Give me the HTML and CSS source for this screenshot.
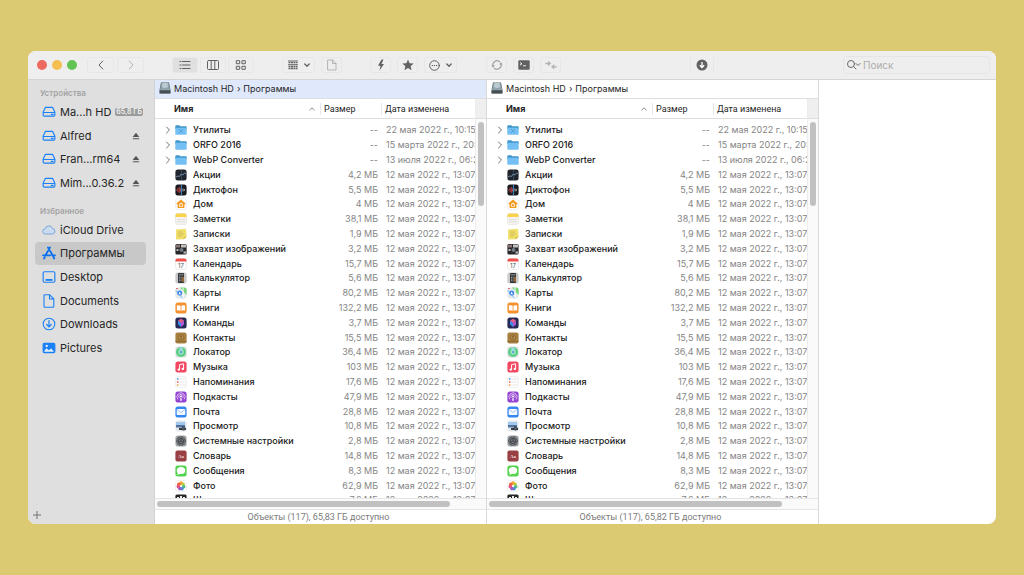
FILE: index.html
```html
<!DOCTYPE html>
<html lang="ru">
<head>
<meta charset="utf-8">
<meta name="viewport" content="width=device-width, initial-scale=1">
<title>Программы</title>
<link rel="stylesheet" href="styles.css">
</head>
<body>
<svg class="sprite" aria-hidden="true">
  <symbol id="drive" viewBox="0 0 12 12"><path d="M3 2h6l2 4v2.600a1 1 0 0 1-1 1H2a1 1 0 0 1-1-1V6zM1 6.400h10M8 8.100h1.500" fill="none" stroke="#1a80f5" stroke-linejoin="round" stroke-linecap="round"/></symbol>
  <symbol id="cloud" viewBox="0 0 14 12"><path d="M3.500 10a2.600 2.600 0 0 1-.3-5.200A3.800 3.800 0 0 1 10.500 4.500a2.800 2.800 0 0 1 .3 5.500z" fill="#cbdcf0" stroke="#6f9fda" stroke-width=".9"/></symbol>
  <symbol id="apps" viewBox="0 0 14 14"><path d="M6 1.500l4.800 8M8 1.500L3.600 9M1 9.300h7.500M10.500 9.300H13M2.800 11.200l-.8 1.300M11.200 10.500l1 2" fill="none" stroke="#0b72ef" stroke-width="1.800" stroke-linecap="round"/></symbol>
  <symbol id="desktop" viewBox="0 0 12 12"><rect x="1" y="1.500" width="10" height="9" rx="1" fill="none" stroke="#1a80f5"/><path d="M3 8.500h6" stroke="#1a80f5" stroke-width="1.600"/></symbol>
  <symbol id="document" viewBox="0 0 12 14"><path d="M2 .7h4.500L10.800 5v7.300a1 1 0 0 1-1 1H2a1 1 0 0 1-1-1V1.700a1 1 0 0 1 1-1zM6.500.9V5h4" fill="none" stroke="#1a80f5" stroke-width="1.100" stroke-linejoin="round"/></symbol>
  <symbol id="downloads" viewBox="0 0 14 14"><circle cx="7" cy="7" r="5.800" fill="none" stroke="#1a80f5" stroke-width="1.100"/><path d="M7 3.500v6M4.700 7.500L7 9.800l2.300-2.300" fill="none" stroke="#1a80f5" stroke-width="1.200" stroke-linecap="round"/></symbol>
  <symbol id="pictures" viewBox="0 0 12 12"><rect x="1" y="2" width="10" height="8" rx="1" fill="#1a80f5" stroke="#1a80f5"/><path d="M1.800 9l2-3 1.800 2 2.400-1.500L10.200 9.300H1.800z" fill="#e4eefa"/><circle cx="4" cy="4.200" r="1" fill="#e4eefa"/></symbol>
  <symbol id="eject" viewBox="0 0 8 8"><path d="M4 .8L7.300 5H.7zM.8 6.200h6.400v1H.8z" fill="#555"/></symbol>
  <symbol id="disk" viewBox="0 0 12 12"><path d="M2 .5h8L11.700 9v2a.7.7 0 0 1-.7.7H1a.7.7 0 0 1-.7-.7V9z" fill="#59646a"/><path d="M2.500 1h7L11 8H1z" fill="#93a5ac"/><path d="M3.500 1h5l.5 4q-3 2-6 0z" fill="#b9ccd2"/><path d="M1 9h10v2H1z" fill="#454e52"/></symbol>
  <symbol id="folder" viewBox="0 0 12 12"><path d="M.3 2.200q0-1 1-1h2.900l1.200 1h5.400q.9 0 .9.900v2H.3z" fill="#3f96ca"/><path d="M.3 3.700h11.400v6.200q0 .8-.8.8H1.100q-.8 0-.8-.8z" fill="#74bff3"/></symbol>
  <symbol id="utilities" viewBox="0 0 12 12"><use href="#folder"/><path d="M4 5l4 4M8 5L4 9" stroke="#4d9dd3" stroke-width=".8"/></symbol>
  <symbol id="stocks" viewBox="0 0 12 12"><rect x=".4" y=".4" width="11.200" height="11.200" rx="2.500" fill="#20242c"/><path d="M1 8l2-1 1.500.5L6 5l2 1 1.500-2L11 4.500" fill="none" stroke="#7da0bf" stroke-width=".8"/><path d="M6.500 1v10" stroke="#4a6f93" stroke-width=".5"/></symbol>
  <symbol id="voice" viewBox="0 0 12 12"><rect x=".4" y=".4" width="11.200" height="11.200" rx="2.500" fill="#1c1a1f"/><path d="M1.700 5.500v1M3 4v4M4.300 3v6M5.500 4.500v3" stroke="#e34b4b" stroke-width=".8"/><path d="M6.400 1v10" stroke="#3aa0ea" stroke-width=".9"/><path d="M8 4.500v3M9.300 5v2" stroke="#c9c9c9" stroke-width=".8"/></symbol>
  <symbol id="home" viewBox="0 0 12 12"><rect x=".5" y=".5" width="11" height="11" rx="2.500" fill="#fff" stroke="#e7e7e7" stroke-width=".6"/><path d="M6 1.500l4.700 4-.7.900-.6-.4v4H2.600V6l-.6.400-.7-.9z" fill="#f39a23"/><path d="M6 4.500l1.900 1.600v2.600H4.100V6.100z" fill="#fff1d6"/><path d="M5.100 6.200h1.800v1.700H5.100z" fill="#ef8d1c"/></symbol>
  <symbol id="notes" viewBox="0 0 12 12"><rect x=".4" y=".4" width="11.200" height="11.200" rx="2.300" fill="#f4f3f0" stroke="#dddbd4" stroke-width=".5"/><path d="M.4 4V2.700Q.4.400 2.700.4h6.600q2.300 0 2.300 2.300V4z" fill="#fad34a"/><path d="M2 6.500h8M2 8.800h8" stroke="#d2d0c9" stroke-width=".6"/></symbol>
  <symbol id="stickies" viewBox="0 0 12 12"><path d="M1 1.500l10-.7.700 8-3 2.500-7.700.2z" fill="#efdf6b"/><path d="M11.700 8.800l-3 2.500-.2-2z" fill="#cdb942"/><path d="M3 4h5M3 6h6M3 8h4" stroke="#bfa943" stroke-width=".6"/></symbol>
  <symbol id="capture" viewBox="0 0 12 12"><rect x=".4" y="1" width="11.200" height="10.500" rx="1.500" fill="#28272a"/><path d="M1 2l4-.5v3H1z" fill="#8d7777"/><path d="M6 1.500h5v3H6z" fill="#c5c3c2"/><path d="M1.500 6h2v2h-2zM8.500 8.500H11v2H8.500z" fill="#bdbdbd"/><circle cx="6.500" cy="7" r="2" fill="#6f7c86"/></symbol>
  <symbol id="calendar" viewBox="0 0 12 12"><rect x=".4" y=".4" width="11.200" height="11.200" rx="2.300" fill="#fcfcfc" stroke="#ddd" stroke-width=".5"/><path d="M.4 3.600V2.700Q.4.400 2.700.4h6.600q2.300 0 2.300 2.300v.9z" fill="#ee5149"/><text x="6" y="9.600" text-anchor="middle" class="icon-day">17</text></symbol>
  <symbol id="calculator" viewBox="0 0 12 12"><rect x=".4" y=".4" width="11.200" height="11.200" rx="2.300" fill="#c9c9c9"/><rect x="3" y="1" width="6" height="10" rx=".8" fill="#35373a"/><path d="M3.700 2h4.600v1.500H3.700z" fill="#6f7679"/><path d="M4 5.300h3M4 7h3M4 8.700h3" stroke="#b5b5b5" stroke-width=".9" stroke-dasharray="1 .6"/><path d="M8 4.800v5" stroke="#f0952b"/></symbol>
  <symbol id="maps" viewBox="0 0 12 12"><rect x=".4" y=".4" width="11.200" height="11.200" rx="2.500" fill="#e4eae6"/><path d="M5 .4h4.300q2.300 0 2.300 2.300V8z" fill="#75d476"/><path d="M.6 3L8 11.500" stroke="#a5cdf5" stroke-width="1.500"/><path d="M8 .5v11" stroke="#fff"/><circle cx="4.700" cy="6" r="2.500" fill="#3b83ed"/><path d="M4.700 4.400L6 7.500l-1.300-.6-1.300.6z" fill="#fff"/><path d="M1 1.500h2" stroke="#e8697e"/></symbol>
  <symbol id="books" viewBox="0 0 12 12"><rect x=".4" y=".4" width="11.200" height="11.200" rx="2.500" fill="#f3922f"/><path d="M1.900 3.500q2-.7 3.700.2v5q-1.700-.8-3.700-.2zM10.100 3.500q-2-.7-3.700.2v5q1.700-.8 3.700-.2z" fill="#fff"/></symbol>
  <symbol id="shortcuts" viewBox="0 0 12 12"><rect x=".4" y=".4" width="11.200" height="11.200" rx="2.500" fill="#262a54"/><path d="M6 1.800l3 1.700-3 3-3-3z" fill="#e65d8c"/><path d="M3 3.500l3 2.700v3.800L3 7.500z" fill="#3e8cec"/><path d="M9 3.500L6 6.200V10l3-2.500z" fill="#b25bd8"/></symbol>
  <symbol id="contacts" viewBox="0 0 12 12"><rect x=".4" y=".4" width="11.200" height="11.200" rx="2" fill="#a8803f"/><path d="M.4 9.500h11.200" stroke="#8b672f" stroke-width=".8"/><circle cx="6" cy="5.500" r="2.800" fill="#b18b4c" stroke="#80602c" stroke-width=".6"/><circle cx="6" cy="4.700" r=".9" fill="#80602c"/><path d="M4.300 7.300q1.700-1.600 3.400 0z" fill="#80602c"/></symbol>
  <symbol id="findmy" viewBox="0 0 12 12"><rect x=".4" y=".4" width="11.200" height="11.200" rx="2.500" fill="#dcdedd"/><circle cx="6" cy="6" r="5" fill="#55ce85"/><circle cx="6" cy="6" r="3" fill="#84dfa2"/><path d="M6 6L3.700 1.800Q6 .8 8.300 1.800z" fill="#9cd8dc"/><circle cx="6" cy="6" r="1.500" fill="#398fdc" stroke="#d9f2ef" stroke-width=".6"/></symbol>
  <symbol id="music" viewBox="0 0 12 12"><rect x=".4" y=".4" width="11.200" height="11.200" rx="2.500" fill="#f34762"/><path d="M4.600 8.500V3.600l4-.8v5" fill="none" stroke="#fff"/><circle cx="3.800" cy="8.600" r="1.200" fill="#fff"/><circle cx="7.800" cy="7.900" r="1.200" fill="#fff"/></symbol>
  <symbol id="reminders" viewBox="0 0 12 12"><rect x=".5" y=".5" width="11" height="11" rx="2.500" fill="#fdfdfd" stroke="#e7e7e7" stroke-width=".6"/><circle cx="2.700" cy="3" r=".9" fill="#5a9df0"/><circle cx="2.700" cy="6" r=".9" fill="#ef7168"/><circle cx="2.700" cy="9" r=".9" fill="#f3ac5b"/><path d="M4.500 3h6M4.500 6h6M4.500 9h6" stroke="#ddd" stroke-width=".6"/></symbol>
  <symbol id="podcasts" viewBox="0 0 12 12"><rect x=".4" y=".4" width="11.200" height="11.200" rx="2.500" fill="#9443d0"/><path d="M3 8.500a4 4 0 1 1 6 0M4.300 7a2.200 2.200 0 1 1 3.400 0" fill="none" stroke="#e9d4f8" stroke-width=".8"/><circle cx="6" cy="5.500" r="1" fill="#fff"/><path d="M5.200 7.200h1.600L6.500 10h-1z" fill="#fff"/></symbol>
  <symbol id="mail" viewBox="0 0 12 12"><rect x=".4" y=".4" width="11.200" height="11.200" rx="2.500" fill="#3486f3"/><rect x="1.700" y="3" width="8.600" height="6" rx=".8" fill="#f4f9ff"/><path d="M2 3.500l4 3 4-3" fill="none" stroke="#83b3ef" stroke-width=".7"/></symbol>
  <symbol id="preview" viewBox="0 0 12 12"><rect x=".4" y=".4" width="11.200" height="11.200" rx="2" fill="#e3e9ef"/><path d="M1 2h9v3.500H1z" fill="#a2c7ec"/><path d="M1 5h9v2.500H1z" fill="#52749f"/><path d="M4 8h7v2H4z" fill="#363c45"/><circle cx="8.500" cy="8.500" r="1.800" fill="#54616f" stroke="#222" stroke-width=".5"/></symbol>
  <symbol id="settings" viewBox="0 0 12 12"><rect x=".4" y=".4" width="11.200" height="11.200" rx="2.500" fill="#a1a5a7"/><circle cx="6" cy="6" r="4.300" fill="#7d8185" stroke="#3c3f42" stroke-width="1.100" stroke-dasharray="1 .5"/><circle cx="6" cy="6" r="2.600" fill="none" stroke="#34363a" stroke-width=".8"/><path d="M6 6V3.500M6 6l2.200 1.300M6 6L3.800 7.300" stroke="#34363a" stroke-width=".8"/></symbol>
  <symbol id="dictionary" viewBox="0 0 12 12"><rect x=".4" y=".4" width="11.200" height="11.200" rx="2" fill="#994044"/><text x="6" y="7.800" text-anchor="middle" class="icon-letters">Aa</text></symbol>
  <symbol id="messages" viewBox="0 0 12 12"><rect x=".4" y=".4" width="11.200" height="11.200" rx="2.500" fill="#54d34f"/><ellipse cx="6" cy="5.600" rx="4.200" ry="3.500" fill="#fff"/><path d="M3 7.500L2.300 10l3-1.300z" fill="#fff"/></symbol>
  <symbol id="photos" viewBox="0 0 12 12"><rect x=".5" y=".5" width="11" height="11" rx="2.500" fill="#fff" stroke="#e7e7e7" stroke-width=".6"/><circle cx="6" cy="3.200" r="1.900" fill="#f5a32f"/><circle cx="8.200" cy="4.300" r="1.800" fill="#bdca3c"/><circle cx="8.700" cy="6.700" r="1.800" fill="#50ba84"/><circle cx="7" cy="8.700" r="1.800" fill="#4d8fd6"/><circle cx="4.800" cy="8.600" r="1.800" fill="#905fc6"/><circle cx="3.300" cy="6.600" r="1.800" fill="#dc5390"/><circle cx="3.800" cy="4.300" r="1.800" fill="#ee6340"/></symbol>
  <symbol id="chess" viewBox="0 0 12 12"><rect x=".4" y=".4" width="11.200" height="11.200" rx="1.500" fill="#262626"/><path d="M2 3h2v1.500H2zM5 2h2v2H5zM8 3h2v1.500H8z" fill="#eee"/></symbol>
</svg>

<div class="window">
  <header class="toolbar">
    <div class="lights"><button class="light red" aria-label="Закрыть"></button><button class="light yellow" aria-label="Свернуть"></button><button class="light green" aria-label="Развернуть"></button></div>
    <nav class="group nav">
      <button class="tool" aria-label="Назад"><svg width="12" height="12" viewBox="0 0 12 12"><path d="M7.800 2L4 6l3.800 4" class="line"/></svg></button>
      <button class="tool faint" aria-label="Вперёд"><svg width="12" height="12" viewBox="0 0 12 12"><path d="M4.200 2L8 6l-3.800 4" class="line"/></svg></button>
    </nav>
    <div class="group views">
      <button class="tool active" aria-label="Список"><svg width="12" height="12" viewBox="0 0 12 12"><path d="M3.500 2.500H11M3.500 6H11M3.500 9.500H11M1 2.500h1M1 6h1M1 9.500h1" class="line"/></svg></button>
      <button class="tool" aria-label="Колонки"><svg width="12" height="12" viewBox="0 0 12 12"><rect x=".5" y="1.500" width="11" height="9" rx="1" class="line"/><path d="M4.200 1.500v9M7.800 1.500v9" class="line"/></svg></button>
      <button class="tool" aria-label="Значки"><svg width="12" height="12" viewBox="0 0 12 12"><path d="M1.700 1.700h3v3h-3zM7.300 1.700h3v3h-3zM1.700 7.300h3v3h-3zM7.300 7.300h3v3h-3z" class="line"/></svg></button>
    </div>
    <div class="group arrange">
      <button class="tool wide" aria-label="Группировка"><svg width="10" height="10" viewBox="0 0 10 10"><path d="M.5 1h9M.5 4.700h9" class="line"/><path d="M.5 2.700h9M.5 6.500h9M.5 8.500h9" class="line dashed"/></svg><svg width="6" height="6" viewBox="0 0 6 6"><path d="M.8 2L3 4.200 5.200 2" class="line thick"/></svg></button>
      <button class="tool narrow faint" aria-label="Новый файл"><svg width="10" height="12" viewBox="0 0 10 12"><path d="M1 1h4.500L9 4.500V11H1zM5.500 1v3.500H9" class="line"/></svg></button>
    </div>
    <div class="group actions">
      <button class="tool narrow" aria-label="Быстрые действия"><svg width="10" height="12" viewBox="0 0 10 12"><path d="M5.500.5L2 6.700h2.500L3.500 11.500 8 5H5.500L7.500.5z" class="solid"/></svg></button>
      <button class="tool narrow" aria-label="Избранное"><svg width="12" height="12" viewBox="0 0 12 12"><path d="M6 .4l1.600 3.800 4.100.3-3.100 2.700 1 4L6 9 2.400 11.200l1-4L.3 4.500l4.100-.3z" class="solid"/></svg></button>
      <button class="tool wide" aria-label="Ещё"><svg width="11" height="11" viewBox="0 0 11 11"><circle cx="5.500" cy="5.500" r="4.800" class="line"/><path d="M2.800 5h1.200v1H2.800zM4.900 5h1.200v1H4.900zM7 5h1.200v1H7z" class="solid"/></svg><svg width="6" height="6" viewBox="0 0 6 6"><path d="M.8 2L3 4.200 5.200 2" class="line thick"/></svg></button>
    </div>
    <div class="group sync">
      <button class="tool narrow pale" aria-label="Обновить"><svg width="12" height="12" viewBox="0 0 12 12"><path d="M2.100 7.500A4.200 4.200 0 0 1 8.500 2.600M9.900 4.500A4.200 4.200 0 0 1 3.500 9.400" class="line thick"/><path d="M.3 6.500h3.600L2.100 8.800zM11.700 5.500H8.100l1.800-2.300z" class="solid"/></svg></button>
      <button class="tool narrow" aria-label="Терминал"><svg width="12" height="12" viewBox="0 0 12 12"><rect x=".3" y="1.300" width="11.400" height="9.400" rx="1.200" class="solid"/><path d="M2 3.500l2 1.300-2 1.300M5 6.800h3" fill="none" stroke="#fff" stroke-width=".9"/></svg></button>
      <button class="tool narrow faint" aria-label="Синхронизировать"><svg width="12" height="12" viewBox="0 0 12 12"><path d="M.8 4.500h3M8.500 7.800h3" class="line thick"/><path d="M3 1.700L6.300 4.500 3 7.300zM9.300 5L6 7.800l3.300 2.800z" class="solid"/></svg></button>
    </div>
    <button class="tool transfers" aria-label="Загрузки"><svg width="12" height="12" viewBox="0 0 12 12"><circle cx="6" cy="6" r="5.500" class="solid"/><path d="M6 3v5M3.800 6.200L6 8.500l2.200-2.300" fill="none" stroke="#fff" stroke-width="1.300"/></svg></button>
    <label class="search"><svg width="16" height="12" viewBox="0 0 16 12"><circle cx="5" cy="5" r="3.500" class="line"/><path d="M7.700 7.700L10 10M10 4.500l2 2 2-2" class="line"/></svg><input type="search" placeholder="Поиск" aria-label="Поиск"></label>
  </header>

  <main class="content">
    <aside class="sidebar">
      <h2 class="section">Устройства</h2>
      <ul class="places devices">
        <li><a class="place" href="#"><svg class="place-icon"><use href="#drive"/></svg>Ma...h HD<span class="badge">65,8 ГБ</span></a></li>
        <li><a class="place" href="#"><svg class="place-icon"><use href="#drive"/></svg>Alfred<svg class="eject"><use href="#eject"/></svg></a></li>
        <li><a class="place" href="#"><svg class="place-icon"><use href="#drive"/></svg>Fran...rm64<svg class="eject"><use href="#eject"/></svg></a></li>
        <li><a class="place" href="#"><svg class="place-icon"><use href="#drive"/></svg>Mim...0.36.2<svg class="eject"><use href="#eject"/></svg></a></li>
      </ul>
      <h2 class="section">Избранное</h2>
      <ul class="places favorites">
        <li><a class="place" href="#"><svg class="place-icon"><use href="#cloud"/></svg>iCloud Drive</a></li>
        <li><a class="place selected" href="#"><svg class="place-icon"><use href="#apps"/></svg>Программы</a></li>
        <li><a class="place" href="#"><svg class="place-icon"><use href="#desktop"/></svg>Desktop</a></li>
        <li><a class="place" href="#"><svg class="place-icon"><use href="#document"/></svg>Documents</a></li>
        <li><a class="place" href="#"><svg class="place-icon"><use href="#downloads"/></svg>Downloads</a></li>
        <li><a class="place" href="#"><svg class="place-icon"><use href="#pictures"/></svg>Pictures</a></li>
      </ul>
      <button class="add" aria-label="Добавить"><svg width="8" height="8" viewBox="0 0 8 8"><path d="M4 0v8M0 4h8" class="line"/></svg></button>
    </aside>
    <section class="pane focused" data-free="65,83"></section>
    <section class="pane" data-free="65,82"></section>
    <section class="details"></section>
  </main>
</div>
<script src="app.js"></script>
</body>
</html>
```

FILE: styles.css
```css
* { box-sizing: border-box; }

body {
  margin: 0;
  height: 100vh;
  padding: 51px 28px;
  background: #dcca73;
  font-family: Inter, "Liberation Sans", sans-serif;
  font-size: 9px;
  color: #262626;
}

button {
  padding: 0;
  border: 0;
  background: none;
  font: inherit;
  color: inherit;
}

svg { display: block; flex: none; }
.sprite { position: absolute; width: 0; height: 0; }
.line { fill: none; stroke: currentColor; stroke-width: 1; stroke-linecap: round; stroke-linejoin: round; }
.line.thick { stroke-width: 1.3; }
.line.dashed { stroke-width: 1.3; stroke-dasharray: 2 .5; stroke-linecap: butt; }
.solid { fill: currentColor; }
.icon-day { font: 6px Inter, sans-serif; fill: #555; }
.icon-letters { font: bold 5px "Liberation Serif", serif; fill: #f2dada; }

.window {
  display: flex;
  flex-direction: column;
  height: 100%;
  border-radius: 8px;
  overflow: hidden;
  background: #fff;
}

/* Toolbar */
.toolbar {
  display: flex;
  align-items: center;
  flex: none;
  height: 29px;
  padding: 0 6px 0 9px;
  background: #efeeef;
  border-bottom: 1px solid #d4d4d4;
}
.lights { display: flex; gap: 5px; }
.light { width: 10px; height: 10px; border-radius: 50%; }
.red { background: #ec6a5f; }
.yellow { background: #f5bf50; }
.green { background: #61c455; }
.group { display: flex; gap: 6px; }
.nav { margin-left: 10px; gap: 3px; }
.views { margin-left: 28px; gap: 2px; }
.arrange, .actions { margin-left: 28px; }
.sync { margin-left: 29px; }
.tool {
  display: flex;
  align-items: center;
  justify-content: center;
  gap: 6px;
  width: 27px;
  height: 16px;
  border: 1px solid #e8e7e8;
  border-radius: 3px;
  color: #626262;
}
.views .tool { width: 26px; }
.tool.narrow { width: 21px; }
.tool.wide { width: 33px; }
.tool.active { background: #e1e0e1; }
.tool.faint { color: #b3b3b3; }
.tool.pale { color: #a2a2a2; }
.tool.transfers {
  width: 24px;
  margin: 0 auto;
  border-width: 0 1px;
  border-radius: 0;
}
.search {
  display: flex;
  align-items: center;
  width: 147px;
  height: 18px;
  padding: 0 2px;
  border: 1px solid #e6e5e6;
  border-radius: 4px;
  color: #6b6b6b;
}
.search input {
  flex: 1;
  min-width: 0;
  padding: 0 0 0 1px;
  border: 0;
  outline: 0;
  background: none;
  font: 10px Inter, sans-serif;
}
.search input::placeholder { color: #acacac; }

/* Columns */
.content {
  display: grid;
  grid-template-columns: 127px minmax(0, 332fr) minmax(0, 332fr) minmax(0, 177fr);
  flex: 1;
  min-height: 0;
}

/* Sidebar */
.sidebar {
  display: flex;
  flex-direction: column;
  padding: 7px 8px 4px 7px;
  background: #dfdfdf;
  border-right: 1px solid #d3d3d3;
}
.section {
  margin: 0;
  padding-left: 5px;
  font-size: 8px;
  font-weight: 600;
  line-height: 13px;
  color: #a3a3a3;
}
.places {
  display: grid;
  grid-auto-rows: 1fr;
  margin: 0 0 10px;
  padding: 0;
  list-style: none;
}
.devices { height: 95px; }
.favorites { height: 142px; }
.place {
  display: flex;
  align-items: center;
  gap: 4px;
  height: 100%;
  padding: 0 4px 0 7px;
  border-radius: 4px;
  font-size: 11px;
  color: #262626;
  text-decoration: none;
  white-space: nowrap;
}
.place.selected { background: #c8c8c8; }
.place-icon { width: 14px; height: 14px; }
.eject { width: 8px; height: 8px; margin-left: auto; margin-right: 3px; }
.badge {
  margin-left: auto;
  padding: 0 1px;
  border-radius: 2px;
  background: #9b9b9b;
  color: #f2f2f2;
  font-size: 7px;
  font-weight: 600;
  line-height: 8px;
}
.add { margin-top: auto; width: 8px; height: 10px; margin-left: -2px; color: #737373; }

/* File pane */
.pane {
  display: flex;
  flex-direction: column;
  min-width: 0;
  min-height: 0;
  border-right: 1px solid #dadada;
}
.path {
  display: flex;
  align-items: center;
  flex: none;
  gap: 3px;
  height: 19px;
  padding: 0 0 2px 4px;
  border-bottom: 1px solid #dedede;
  white-space: nowrap;
}
.focused .path { background: #e0e9fb; }
.path svg { width: 12px; height: 12px; }
.path a { color: inherit; text-decoration: none; }
.listing {
  display: grid;
  grid-template-columns: minmax(0, 1fr) 11px;
  flex: 1;
  min-height: 0;
}
.viewport { min-height: 0; overflow: hidden; }
.files {
  width: 100%;
  height: 409px;
  border-collapse: separate;
  border-spacing: 0;
  table-layout: fixed;
}
.col-size { width: 61px; }
.col-date { width: 94px; }
.files thead { height: 24px; }
.files th {
  height: 20px;
  padding: 0;
  border-bottom: 1px solid #dfdfdf;
  font-weight: 400;
  text-align: left;
  white-space: nowrap;
}
.files .gap { height: 4px; padding: 0; border: 0; }
.files th:first-child { padding: 0 5px 0 19px; font-weight: 700; }
.head { display: flex; align-items: center; justify-content: space-between; }
.head svg { color: #8a8a8a; }
.split {
  padding-left: 3px;
  border-left: 1px solid #e6e6e6;
  font-family: Roboto, sans-serif;
  line-height: 12px;
}
.files td {
  padding: 0;
  overflow: hidden;
  line-height: 12px;
  white-space: nowrap;
  color: #858585;
}
.name {
  display: flex;
  align-items: center;
  padding-left: 10px;
  font-weight: 500;
  color: #202020;
}
.name .twist { width: 6px; height: 8px; margin-right: 4px; color: #707070; }
.name .app { width: 12px; height: 12px; margin-right: 6px; }
.files .size { padding-right: 3px; text-align: right; }
.files .date { padding-left: 5px; }
.gutter {
  background: #fafafa;
  border-left: 1px solid #ececec;
}
.gutter-head { height: 20px; background: #efefef; border-bottom: 1px solid #dfdfdf; }
.thumb { width: 6px; height: 84px; margin: 3px 0 0 2px; border-radius: 3px; background: #c1c1c1; }
.hscroll {
  flex: none;
  height: 12px;
  padding: 2px 36px 3px 2px;
  background: #fafafa;
  border: solid #e6e6e6;
  border-width: 1px 0;
}
.hthumb { height: 6px; border-radius: 3px; background: #c1c1c1; }
.status {
  flex: none;
  height: 14px;
  padding-right: 4px;
  font-family: Roboto, sans-serif;
  line-height: 14px;
  text-align: center;
  color: #7b7b7b;
}
```

FILE: app.js
```js
const files = [
  ['utilities', 'Утилиты', '--', '22 мая 2022 г., 10:15'],
  ['folder', 'ORFO 2016', '--', '15 марта 2022 г., 20:14'],
  ['folder', 'WebP Converter', '--', '13 июля 2022 г., 06:25'],
  ['stocks', 'Акции', '4,2 МБ'],
  ['voice', 'Диктофон', '5,5 МБ'],
  ['home', 'Дом', '4 МБ'],
  ['notes', 'Заметки', '38,1 МБ'],
  ['stickies', 'Записки', '1,9 МБ'],
  ['capture', 'Захват изображений', '3,2 МБ'],
  ['calendar', 'Календарь', '15,7 МБ'],
  ['calculator', 'Калькулятор', '5,6 МБ'],
  ['maps', 'Карты', '80,2 МБ'],
  ['books', 'Книги', '132,2 МБ'],
  ['shortcuts', 'Команды', '3,7 МБ'],
  ['contacts', 'Контакты', '15,5 МБ'],
  ['findmy', 'Локатор', '36,4 МБ'],
  ['music', 'Музыка', '103 МБ'],
  ['reminders', 'Напоминания', '17,6 МБ'],
  ['podcasts', 'Подкасты', '47,9 МБ'],
  ['mail', 'Почта', '28,8 МБ'],
  ['preview', 'Просмотр', '10,8 МБ'],
  ['settings', 'Системные настройки', '2,8 МБ'],
  ['dictionary', 'Словарь', '14,8 МБ'],
  ['messages', 'Сообщения', '8,3 МБ'],
  ['photos', 'Фото', '62,9 МБ'],
  ['chess', 'Шахматы', '7,6 МБ'],
];

const rows = files.map(([icon, name, size, date = '12 мая 2022 г., 13:07']) => {
  const chevron = size === '--' ? '<path d="M1.500 1l3 3-3 3" class="line"/>' : '';
  return `<tr>
    <td><div class="name"><svg class="twist" viewBox="0 0 6 8">${chevron}</svg><svg class="app"><use href="#${icon}"/></svg>${name}</div></td>
    <td class="size">${size}</td>
    <td class="date">${date}</td>
  </tr>`;
}).join('');

document.querySelectorAll('.pane').forEach((pane) => {
  pane.innerHTML = `
    <nav class="path"><svg><use href="#disk"/></svg><a href="#">Macintosh HD</a><span>›</span><a href="#">Программы</a></nav>
    <div class="listing">
      <div class="viewport">
        <table class="files">
          <colgroup><col><col class="col-size"><col class="col-date"></colgroup>
          <thead>
            <tr>
              <th><div class="head">Имя<svg width="6" height="6" viewBox="0 0 6 6"><path d="M.7 4L3 1.800 5.300 4" class="line"/></svg></div></th>
              <th><div class="split">Размер</div></th>
              <th><div class="split">Дата изменена</div></th>
            </tr>
            <tr><td class="gap" colspan="3"></td></tr>
          </thead>
          <tbody>${rows}</tbody>
        </table>
      </div>
      <div class="gutter"><div class="gutter-head"></div><div class="thumb"></div></div>
    </div>
    <div class="hscroll"><div class="hthumb"></div></div>
    <footer class="status">Объекты (117), ${pane.dataset.free} ГБ доступно</footer>`;
});
```
